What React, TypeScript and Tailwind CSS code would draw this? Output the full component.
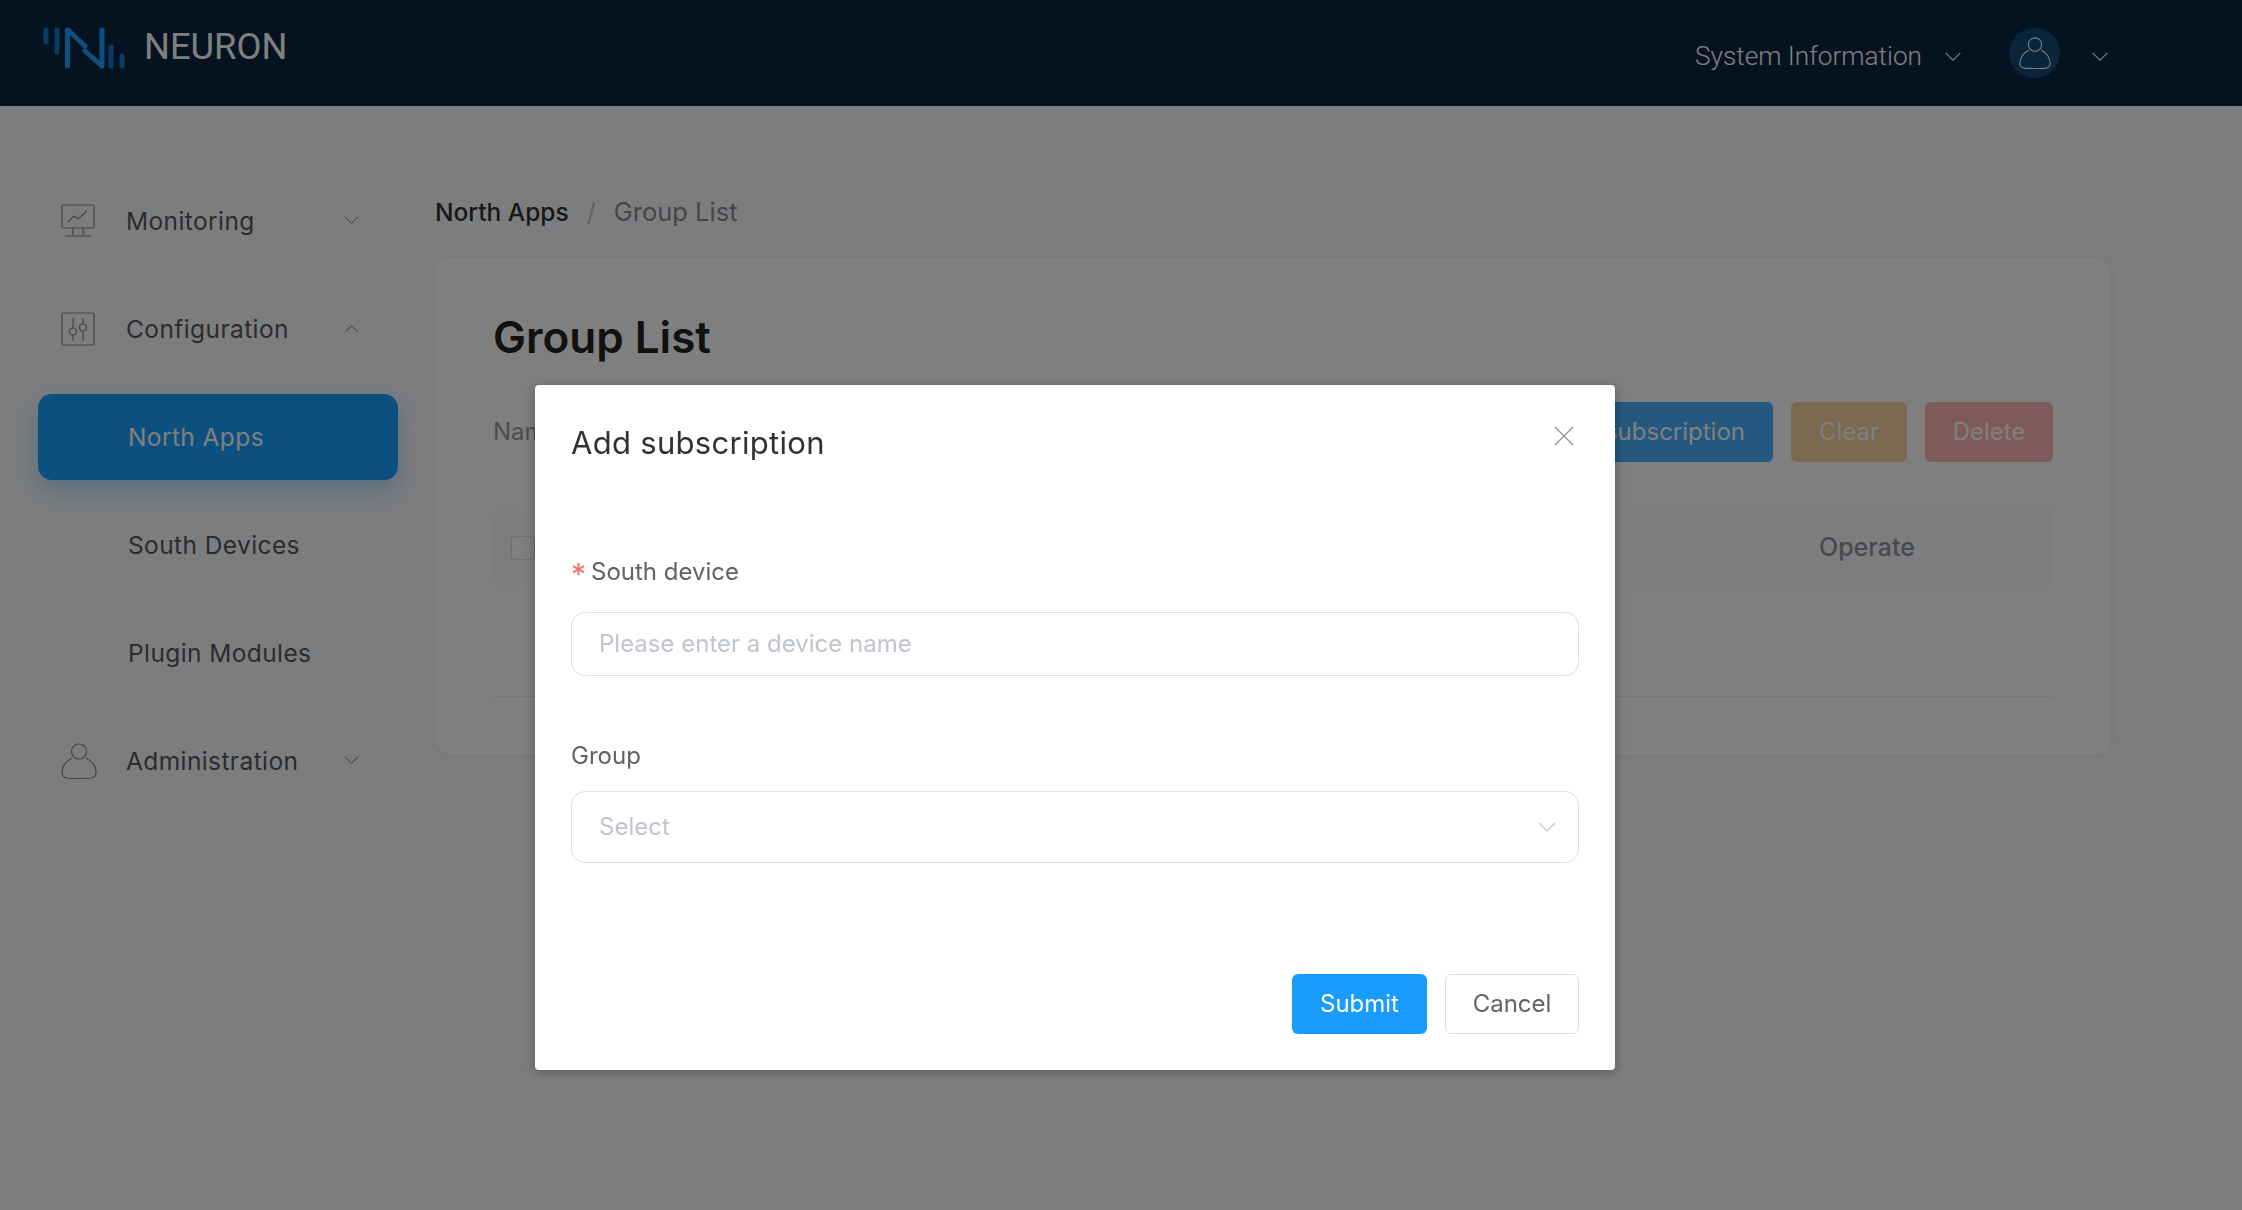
import React from 'react';

const Chevron = ({ up, className }: { up?: boolean; className?: string }) => (
  <svg viewBox="0 0 20 12" fill="none" stroke="currentColor" strokeWidth="1.2" className={className}>
    <path d={up ? 'M2 10l8-8 8 8' : 'M2 2l8 8 8-8'} />
  </svg>
);

const UserIcon = ({ className }: { className?: string }) => (
  <svg viewBox="0 0 36 36" fill="none" stroke="currentColor" strokeWidth="1.2" className={className}>
    <circle cx="18" cy="8.5" r="7.5" />
    <path d="M11 15C5 18 1 23 1 30c0 3 2 4.500 5 5 8 .8 16 .8 24 0 3-.5 5-2 5-5 0-7-4-12-10-15" />
  </svg>
);

const Logo = () => (
  <svg viewBox="0 0 82 44" className="w-[82px] h-[44px]" fill="none" strokeLinecap="round" strokeWidth="5">
    <g stroke="#1078c8">
      <path d="M3 5v12M14 5v22M68 22v19M79 31v10" />
    </g>
    <g stroke="#18a0ff">
      <path d="M24.500 5v36M59 5v36M25 5l17 16M42 26l17 15" />
    </g>
  </svg>
);

function NavGroup({ icon, label, up }: { icon: React.ReactNode; label: string; up?: boolean }) {
  return (
    <div className="h-[86px] flex items-center pl-[23px] pr-[38px] mb-[22px] text-[#58585c]">
      <span className="w-[65px] shrink-0 text-[#8c8c90]">{icon}</span>
      <span className="flex-1 text-[24.5px] tracking-[0.4px]">{label}</span>
      <Chevron up={up} className={'w-[17px] h-[10px] text-[#808084] ' + (up ? '' : '-mt-[3px]')} />
    </div>
  );
}

function SubItem({ label, active }: { label: string; active?: boolean }) {
  return (
    <div
      className={
        'h-[86px] mb-[22px] flex items-center pl-[90px] rounded-[14px] text-[24.5px] tracking-[0.4px] ' +
        (active ? 'bg-[#18a0ff] text-white shadow-[0_10px_24px_rgba(24,160,255,0.35)]' : 'text-[#58585c]')
      }
    >
      {label}
    </div>
  );
}

function AddSubscriptionModal() {
  return (
    <div className="fixed inset-0 bg-black/50 pl-[535px] pt-[385px]">
      <div className="w-[1080px] h-[685px] bg-white rounded-[4px] shadow-[0_2px_12px_rgba(0,0,0,0.3)] px-[36px] relative flex flex-col">
        <h2 className="pt-[39px] text-[31px] leading-[38px] text-[#303133] tracking-[0.3px]">Add subscription</h2>
        <svg viewBox="0 0 20 20" fill="none" stroke="#909399" strokeWidth="1.4" className="absolute right-[41px] top-[41px] w-[20px] h-[20px]">
          <path d="M1 1l18 18M19 1L1 19" />
        </svg>

        <label className="mt-[94px] text-[24px] leading-[32px] text-[#606266] flex items-center">
          <span className="text-[#f56c6c] w-[20px] text-[30px] h-[28px] leading-[28px] mt-[4px]">*</span>
          South device
        </label>
        <div className="mt-[24px] h-[64px] border border-[#dcdfe6] rounded-[14px] flex items-center pl-[27px] text-[24px] text-[#c0c4cc]">
          Please enter a device name
        </div>

        <label className="mt-[64px] text-[24px] leading-[32px] text-[#606266]">Group</label>
        <div className="mt-[19px] h-[72px] border border-[#dcdfe6] rounded-[14px] flex items-center justify-between pl-[27px] pr-[21px] text-[24px] text-[#c0c4cc]">
          Select
          <Chevron className="w-[20px] h-[12px]" />
        </div>

        <div className="mt-[111px] flex justify-end gap-[18px]">
          <button className="w-[135px] h-[60px] rounded-[6px] bg-[#189cff] text-white text-[24px]">Submit</button>
          <button className="w-[134px] h-[60px] rounded-[6px] border border-[#dcdfe6] text-[#606266] text-[24px]">Cancel</button>
        </div>
      </div>
    </div>
  );
}

export default function App() {
  return (
    <div className="min-h-screen bg-[#f9fbff] font-['Inter','Liberation_Sans',sans-serif]">
      <header className="h-[106px] bg-[#0a2640] flex items-center pl-[43px] pr-[132px]">
        <div className="flex items-center gap-[19px] -mt-[12px]">
          <Logo />
          <span className="font-['Roboto',sans-serif] text-[36.3px] text-white mt-[1px]">NEURON</span>
        </div>
        <div className="ml-auto flex items-center text-white mt-[6px]">
          <span className="font-['Roboto',sans-serif] font-light text-[26.2px] mt-[1px]">System Information</span>
          <Chevron className="w-[20px] h-[11px] ml-[21px] mr-[46px]" />
          <span className="w-[51px] h-[50px] -mt-[6px] rounded-full bg-[#114a78] flex items-center justify-center">
            <UserIcon className="w-[32px] h-[32px]" />
          </span>
          <Chevron className="w-[20px] h-[11px] ml-[30px]" />
        </div>
      </header>

      <div className="flex">
        <aside className="w-[360px] ml-[38px] mr-[37px] pt-[72px] shrink-0">
          <NavGroup
            label="Monitoring"
            icon={
              <svg viewBox="0 0 34 34" fill="none" stroke="currentColor" strokeWidth="1.2" className="w-[34px] h-[34px]">
                <rect x="1" y="1" width="32" height="23" rx="1.500" />
                <path d="M7 18l6-6 4 3 9-8M12 24v7M22 24v7M4 32h26" />
              </svg>
            }
          />
          <NavGroup
            up
            label="Configuration"
            icon={
              <svg viewBox="0 0 34 34" fill="none" stroke="currentColor" strokeWidth="1.2" className="w-[34px] h-[34px]">
                <rect x="1" y="1" width="32" height="32" rx="1.500" />
                <path d="M12 6v10M12 23v6M22 6v6M22 19v10" />
                <circle cx="12" cy="19.500" r="3.500" />
                <circle cx="22" cy="15.500" r="3.500" />
              </svg>
            }
          />
          <SubItem active label="North Apps" />
          <SubItem label="South Devices" />
          <SubItem label="Plugin Modules" />
          <NavGroup label="Administration" icon={<UserIcon className="w-[36px] h-[36px]" />} />
        </aside>

        <main className="w-[1676px] pt-[90px]">
          <div className="h-[32px] flex items-center leading-[32px]">
            <span className="font-medium text-[24.5px] text-[#303133]">North Apps</span>
            <span className="mx-[18px] text-[25px] text-[#c0c4cc]">/</span>
            <span className="text-[25.500px] text-[#8d8d92]">Group List</span>
          </div>

          <section className="mt-[30px] h-[497px] bg-white rounded-[16px] shadow-[0_0_6px_rgba(0,0,0,0.08)] px-[58px] pt-[52px]">
            <h1 className="text-[44px] leading-[54px] font-semibold text-[#222]">Group List</h1>
            <div className="mt-[38px] flex items-center">
              <span className="text-[24px] text-[#9a9aa0]">Name</span>
              <div className="ml-auto flex gap-[18px] text-[24px] text-white">
                <button className="h-[60px] px-[28px] rounded-[6px] bg-[#48b0ff]">Add subscription</button>
                <button className="h-[60px] w-[116px] rounded-[6px] bg-[#f6d2a0]">Clear</button>
                <button className="h-[60px] w-[128px] rounded-[6px] bg-[#feb4b4]">Delete</button>
              </div>
            </div>
            <div className="mt-[44px] h-[83px] rounded-[12px] bg-[#f8fafe] flex items-center pl-[18px] pr-[138px] justify-between">
              <span className="w-[24px] h-[24px] rounded-[4px] border border-[#dcdfe6] bg-white" />
              <span className="text-[25px] font-medium text-[#909399]">Operate</span>
            </div>
            <div className="mt-[107px] h-px bg-[#ecedf4]" />
          </section>
        </main>
      </div>

      <AddSubscriptionModal />
    </div>
  );
}
